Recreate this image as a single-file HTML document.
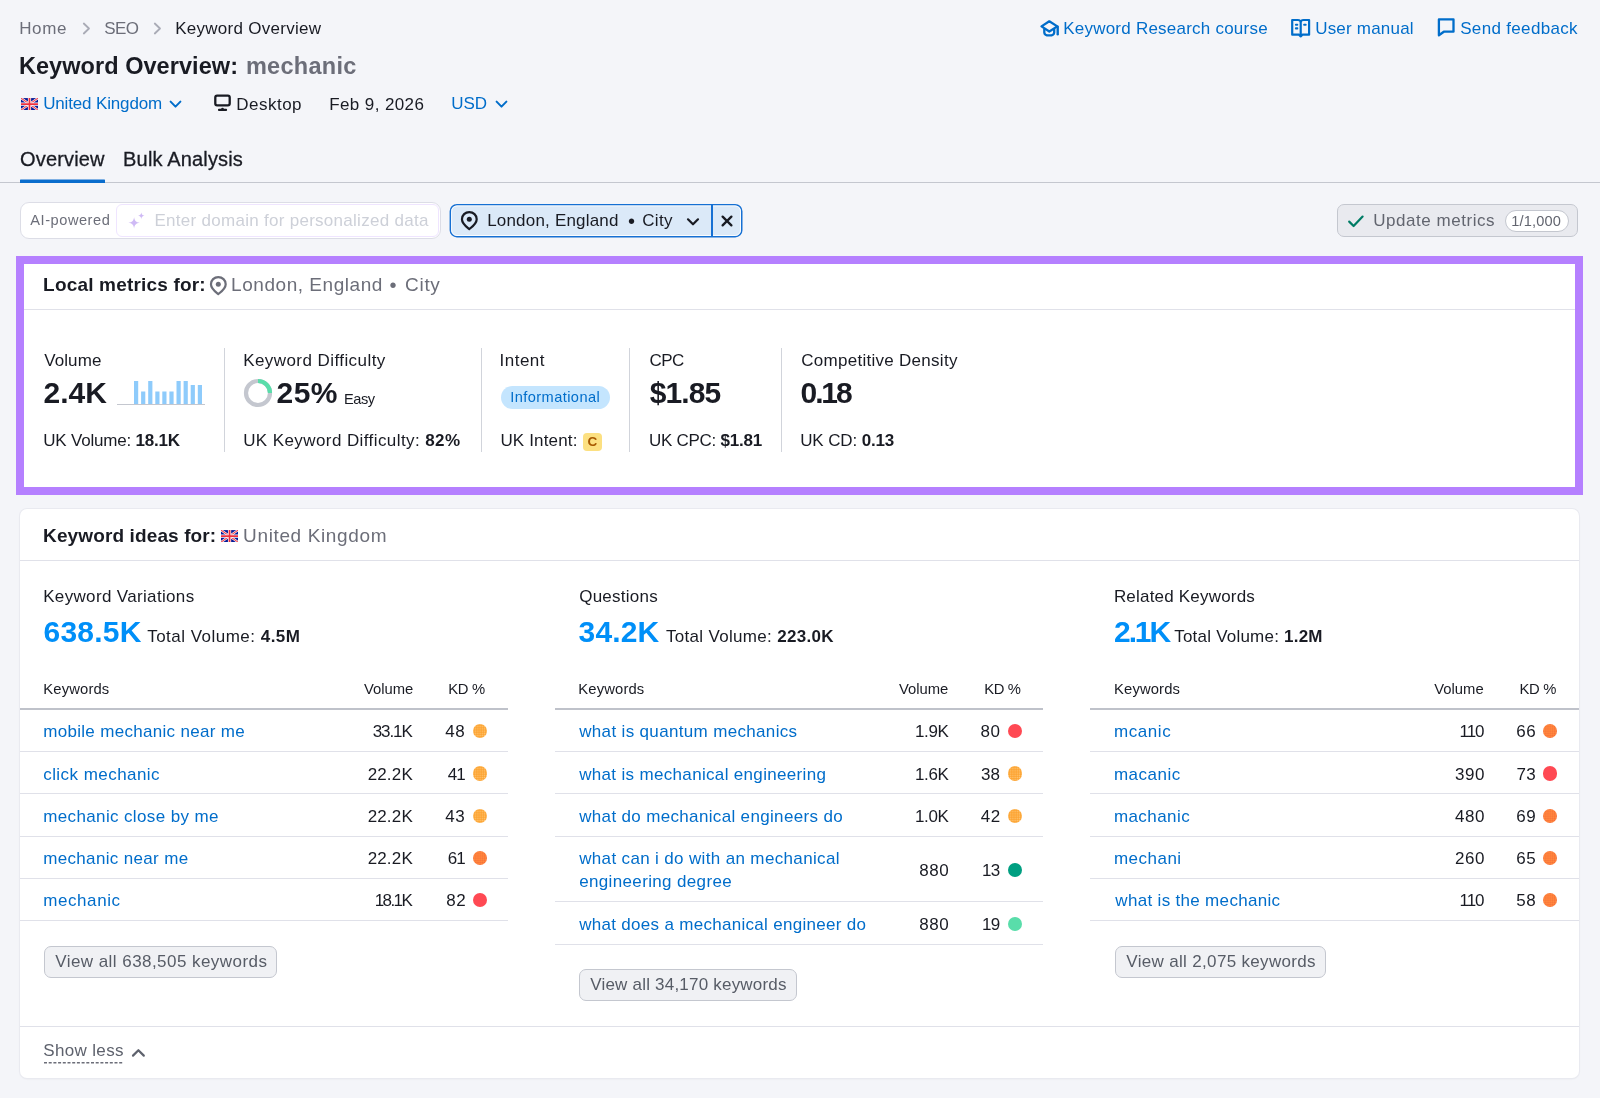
<!DOCTYPE html>
<html lang="en"><head><meta charset="utf-8"><title>Keyword Overview: mechanic</title>
<style>
*{box-sizing:border-box}
html,body{margin:0;padding:0}
body{width:1600px;height:1098px;overflow:hidden;position:relative;background:#f4f5f9;
 font-family:"Liberation Sans",Arial,sans-serif;color:#191b23;-webkit-font-smoothing:antialiased}
#app{position:absolute;left:0;top:0;width:1600px;height:1098px;will-change:transform}
.t{position:absolute;white-space:nowrap;line-height:1}
.t b{font-weight:700}
a.t{color:#006dca;text-decoration:none}
</style></head>
<body>
<div id="app">
<header>
<nav>
<span class="t" id="t1" style="left:19.2px;top:20px;font-size:17px;color:#6c6e79;letter-spacing:0.63px;">Home</span>
<svg style="position:absolute;left:82px;top:22px;" width="9" height="13" viewBox="0 0 9 13" fill="none"><path d="M1.8 1.5 L7 6.5 L1.8 11.5" stroke="#a9abb6" stroke-width="1.8" stroke-linecap="round" stroke-linejoin="round"/></svg>
<span class="t" id="t2" style="left:104.2px;top:20px;font-size:17px;color:#6c6e79;letter-spacing:-0.55px;">SEO</span>
<svg style="position:absolute;left:153px;top:22px;" width="9" height="13" viewBox="0 0 9 13" fill="none"><path d="M1.8 1.5 L7 6.5 L1.8 11.5" stroke="#a9abb6" stroke-width="1.8" stroke-linecap="round" stroke-linejoin="round"/></svg>
<span class="t" id="t3" style="left:175.2px;top:20px;font-size:17px;letter-spacing:0.27px;">Keyword Overview</span>
</nav>
<svg style="position:absolute;left:1034px;top:14px;" width="32" height="28" viewBox="0 0 32 28" fill="none"><path d="M15.3 7.3 L23.3 12.4 L15.3 17.5 L7.5 12.4 Z" stroke="#006dca" stroke-width="2.3" stroke-linejoin="round"/><path d="M10.3 14.8 V18.4 C10.3 22.4 20.2 22.4 20.2 18.4 V14.8" stroke="#006dca" stroke-width="2.3" stroke-linejoin="round"/><path d="M23.7 12.8 V20.3" stroke="#006dca" stroke-width="2.4" stroke-linecap="round"/></svg>
<a class="t" href="#" id="t4" style="left:1063.2px;top:20px;font-size:17px;color:#006dca;letter-spacing:0.23px;">Keyword Research course</a>
<svg style="position:absolute;left:1284px;top:12px;" width="32" height="32" viewBox="0 0 32 32" fill="none"><path d="M8.2 8 H13.8 C15.5 8 16.7 8.9 16.7 10.4 V24.4 L15 22.7 H8.2 Z M25.1 8 H19.6 C17.9 8 16.7 8.9 16.7 10.4 V24.4 L18.4 22.7 H25.1 Z" stroke="#006dca" stroke-width="2.2" stroke-linejoin="round"/><rect x="10.9" y="11.7" width="3.4" height="2.1" rx="1" fill="#006dca"/><rect x="10.9" y="15.3" width="3.4" height="2.1" rx="1" fill="#006dca"/><rect x="19.1" y="11.7" width="3.6" height="2.1" rx="1" fill="#006dca"/></svg>
<a class="t" href="#" id="t5" style="left:1315.2px;top:20px;font-size:17px;color:#006dca;letter-spacing:0.20px;">User manual</a>
<svg style="position:absolute;left:1430px;top:12px;" width="32" height="32" viewBox="0 0 32 32" fill="none"><path d="M8.9 7.4 H23.5 V19.7 H13.8 L8.9 23.3 Z" stroke="#006dca" stroke-width="2.3" stroke-linejoin="round"/></svg>
<a class="t" href="#" id="t6" style="left:1460.2px;top:20px;font-size:17px;color:#006dca;letter-spacing:0.33px;">Send feedback</a>
<span class="t" id="title" style="left:18.9px;top:55px;font-size:23.5px;font-weight:700;letter-spacing:0.06px;">Keyword Overview:</span>
<span class="t" id="titlekw" style="left:245.9px;top:55px;font-size:23.5px;font-weight:700;color:#6c6e79;letter-spacing:0.29px;">mechanic</span>
<svg style="position:absolute;left:21px;top:97.8px;" width="17" height="12.2" viewBox="0 0 17 12" fill="none"><rect width="17" height="12" fill="#071a96"/><path d="M0 0 L17 12 M17 0 L0 12" stroke="#fff" stroke-width="2.3"/><path d="M0 0 L17 12 M17 0 L0 12" stroke="#f2444e" stroke-width="1.1"/><path d="M8.5 0 V12 M0 6 H17" stroke="#fff" stroke-width="3.2"/><path d="M8.5 0 V12 M0 6 H17" stroke="#ee2f3c" stroke-width="1.8"/></svg>
<a class="t" href="#" id="t9" style="left:43.2px;top:95px;font-size:17px;color:#006dca;letter-spacing:-0.15px;">United Kingdom</a>
<svg style="position:absolute;left:169px;top:98.5px;" width="13" height="11" viewBox="0 0 13 11" fill="none"><path d="M1.6 2.6 L6.5 7.6 L11.4 2.6" stroke="#006dca" stroke-width="2" stroke-linecap="round" stroke-linejoin="round"/></svg>
<svg style="position:absolute;left:206px;top:86px;" width="32" height="32" viewBox="0 0 32 32" fill="none"><rect x="9.3" y="9.6" width="14.4" height="9.7" rx="1.8" stroke="#191b23" stroke-width="2.3"/><path d="M13 23.9 H20.1" stroke="#191b23" stroke-width="2.1" stroke-linecap="round"/><circle cx="16.5" cy="23" r="1.3" fill="#191b23"/></svg>
<span class="t" id="t10" style="left:236.2px;top:96px;font-size:17px;letter-spacing:0.50px;">Desktop</span>
<span class="t" id="t11" style="left:329.2px;top:96px;font-size:17px;letter-spacing:0.40px;">Feb 9, 2026</span>
<a class="t" href="#" id="t12" style="left:451.2px;top:95px;font-size:17px;color:#006dca;">USD</a>
<svg style="position:absolute;left:494.5px;top:98.5px;" width="13" height="11" viewBox="0 0 13 11" fill="none"><path d="M1.6 2.6 L6.5 7.6 L11.4 2.6" stroke="#006dca" stroke-width="2" stroke-linecap="round" stroke-linejoin="round"/></svg>
</header>
<div class="tabs">
<div style="position:absolute;left:0px;top:182px;width:1600px;height:1px;background:#c4c7cf"></div>
<span class="t" id="t13" style="left:20.1px;top:149px;font-size:20px;letter-spacing:0.14px;-webkit-text-stroke:0.3px #191b23;">Overview</span>
<span class="t" id="t14" style="left:123.1px;top:149px;font-size:20px;letter-spacing:0.16px;-webkit-text-stroke:0.3px #191b23;">Bulk Analysis</span>
<svg style="position:absolute;left:20px;top:179px;" width="85" height="5" viewBox="0 0 85 5" fill="none"><rect x="0" y="0.4" width="85" height="3.7" rx="0.6" fill="#0a6dcd"/></svg>
</div>
<div class="filters">
<div style="position:absolute;left:20px;top:202.4px;width:421px;height:37px;background:#fff;border:1px solid #dcdde6;border-radius:9px"></div>
<span class="t" id="t15" style="left:30.3px;top:213px;font-size:14.6px;color:#6c6e79;letter-spacing:0.54px;">AI-powered</span>
<div style="position:absolute;left:116px;top:204.2px;width:323px;height:32.8px;background:#fff;border:1px solid #efe5ff;border-radius:6px"></div>
<svg style="position:absolute;left:120px;top:204px;" width="32" height="32" viewBox="0 0 32 32" fill="none"><path d="M14.1 13.2 C14.7 16.9 16 18.2 19.8 18.8 C16 19.4 14.7 20.7 14.1 24.4 C13.5 20.7 12.2 19.4 8.4 18.8 C12.2 18.2 13.5 16.9 14.1 13.2 Z" fill="#cfbaf5"/><path d="M21.3 8.5 C21.65 10.6 22.4 11.35 24.5 11.7 C22.4 12.05 21.65 12.8 21.3 14.9 C20.95 12.8 20.2 12.05 18.1 11.7 C20.2 11.35 20.95 10.6 21.3 8.5 Z" fill="#cfbaf5"/></svg>
<span class="t" id="t16" style="left:154.5px;top:212px;font-size:17px;color:#cdd0d8;letter-spacing:0.28px;">Enter domain for personalized data</span>
<svg style="position:absolute;left:448px;top:202px;" width="296" height="37" viewBox="0 0 296 37" fill="none"><rect x="2.35" y="2.65" width="291.4" height="32.1" rx="6.6" fill="#dbe9f8" stroke="#1670d3" stroke-width="1.5"/><rect x="3.6" y="3.9" width="288.9" height="29.6" rx="5.4" stroke="#fff" stroke-opacity=".85" stroke-width="1"/><path d="M264 2.7 V34.7" stroke="#1670d3" stroke-width="2"/></svg>
<svg style="position:absolute;left:454px;top:205px;" width="32" height="32" viewBox="0 0 32 32" fill="none"><path d="M15.3 7.1 C11.2 7.1 7.95 10.2 7.95 14.2 C7.95 18.6 11.9 21.4 15.3 24.1 C18.7 21.4 22.7 18.6 22.7 14.2 C22.7 10.2 19.4 7.1 15.3 7.1 Z" stroke="#191b23" stroke-width="2.2" stroke-linejoin="round"/><circle cx="15.3" cy="14.3" r="2.5" fill="#191b23"/></svg>
<span class="t" id="t17" style="left:487.2px;top:212px;font-size:17px;letter-spacing:0.19px;">London, England</span>
<span class="t" style="left:628px;top:211px;font-size:20px">&bull;</span>
<span class="t" id="t18" style="left:642.2px;top:212px;font-size:17px;letter-spacing:0.33px;">City</span>
<svg style="position:absolute;left:684px;top:214px;" width="18" height="14" viewBox="0 0 18 14" fill="none"><path d="M4 5.3 L9 10.3 L14 5.3" stroke="#191b23" stroke-width="2.2" stroke-linecap="round" stroke-linejoin="round"/></svg>
<svg style="position:absolute;left:719px;top:212.5px;" width="16" height="16" viewBox="0 0 16 16" fill="none"><path d="M3.6 3.6 L12.4 12.4 M12.4 3.6 L3.6 12.4" stroke="#191b23" stroke-width="2.3" stroke-linecap="round"/></svg>
<div style="position:absolute;left:1336.5px;top:204px;width:241.5px;height:33px;background:#e9eaef;border:1px solid #c4c7cf;border-radius:7px"></div>
<svg style="position:absolute;left:1346.5px;top:213.5px;" width="18" height="15" viewBox="0 0 18 15" fill="none"><path d="M2.2 7.6 L6.6 12 L15.6 2.6" stroke="#007c65" stroke-width="2.2" stroke-linecap="round" stroke-linejoin="round"/></svg>
<span class="t" id="t19" style="left:1373.2px;top:212px;font-size:17px;color:#62656f;letter-spacing:0.54px;">Update metrics</span>
<div style="position:absolute;left:1504.5px;top:210px;width:64px;height:22px;background:#fff;border:1px solid #c4c7cf;border-radius:11px"></div>
<span class="t" id="t20" style="left:1511.3px;top:214px;font-size:14.6px;color:#62656f;letter-spacing:0.14px;">1/1,000</span>
</div>
<section class="local">
<div style="position:absolute;left:16px;top:256px;width:1567px;height:239px;background:#fff;border:8px solid #b580ff"></div>
<span class="t" id="lm_h" style="left:43.1px;top:275px;font-size:19px;font-weight:700;letter-spacing:0.18px;">Local metrics for:</span>
<svg style="position:absolute;left:203.2px;top:270px;" width="32" height="32" viewBox="0 0 32 32" fill="none"><path d="M15.3 7.1 C11.2 7.1 7.95 10.2 7.95 14.2 C7.95 18.6 11.9 21.4 15.3 24.1 C18.7 21.4 22.7 18.6 22.7 14.2 C22.7 10.2 19.4 7.1 15.3 7.1 Z" stroke="#6c6e79" stroke-width="2.2" stroke-linejoin="round"/><circle cx="15.3" cy="14.3" r="2.5" fill="#6c6e79"/></svg>
<span class="t" id="lm_loc" style="left:231.1px;top:275px;font-size:19px;color:#6c6e79;letter-spacing:0.54px;">London, England</span>
<span class="t" style="left:389.5px;top:275px;font-size:20px;color:#6c6e79">&bull;</span>
<span class="t" id="lm_city" style="left:405.1px;top:275px;font-size:19px;color:#6c6e79;letter-spacing:0.67px;">City</span>
<div style="position:absolute;left:24px;top:309px;width:1551px;height:1px;background:#e0e1e9"></div>
<div style="position:absolute;left:224px;top:348px;width:1px;height:104px;background:#d1d4db"></div>
<div style="position:absolute;left:481px;top:348px;width:1px;height:104px;background:#d1d4db"></div>
<div style="position:absolute;left:629px;top:348px;width:1px;height:104px;background:#d1d4db"></div>
<div style="position:absolute;left:781px;top:348px;width:1px;height:104px;background:#d1d4db"></div>
<span class="t" id="lv_l" style="left:44.2px;top:352px;font-size:17px;letter-spacing:0.10px;">Volume</span>
<span class="t" id="lv_v" style="left:43.6px;top:378px;font-size:30px;font-weight:700;">2.4K</span>
<div style="position:absolute;left:117px;top:404px;width:88px;height:1px;background:#c4c7cf"></div>
<svg style="position:absolute;left:117px;top:380px;" width="88" height="24" viewBox="0 0 88 24" fill="none"><rect x="17.0" y="1.0" width="4.2" height="23.0" fill="#8ecbfb"/><rect x="24.1" y="11.5" width="4.2" height="12.5" fill="#8ecbfb"/><rect x="31.2" y="1.0" width="4.2" height="23.0" fill="#8ecbfb"/><rect x="38.3" y="11.5" width="4.2" height="12.5" fill="#8ecbfb"/><rect x="45.3" y="11.5" width="4.2" height="12.5" fill="#8ecbfb"/><rect x="52.4" y="11.5" width="4.2" height="12.5" fill="#8ecbfb"/><rect x="59.5" y="1.0" width="4.2" height="23.0" fill="#8ecbfb"/><rect x="66.6" y="1.0" width="4.2" height="23.0" fill="#8ecbfb"/><rect x="73.7" y="5.0" width="4.2" height="19.0" fill="#8ecbfb"/><rect x="80.8" y="5.0" width="4.2" height="19.0" fill="#8ecbfb"/></svg>
<span class="t" id="lv_s" style="left:43.2px;top:432px;font-size:17px;letter-spacing:-0.20px;">UK Volume: <b>18.1K</b></span>
<span class="t" id="lk_l" style="left:243.2px;top:352px;font-size:17px;letter-spacing:0.43px;">Keyword Difficulty</span>
<svg style="position:absolute;left:243px;top:377.8px;" width="30" height="30" viewBox="0 0 30 30" fill="none"><circle cx="15" cy="15" r="12" stroke="#c4c7cf" stroke-width="4.2"/><path d="M15 3 A12 12 0 0 1 27 15" stroke="#59ddaa" stroke-width="4.2"/></svg>
<span class="t" id="lk_v" style="left:276.6px;top:378px;font-size:30px;font-weight:700;letter-spacing:0.45px;">25%</span>
<span class="t" id="lk_e" style="left:344.1px;top:392px;font-size:14.6px;letter-spacing:-0.46px;">Easy</span>
<span class="t" id="lk_s" style="left:243.2px;top:432px;font-size:17px;letter-spacing:0.41px;">UK Keyword Difficulty: <b>82%</b></span>
<span class="t" id="li_l" style="left:499.6px;top:352px;font-size:17px;letter-spacing:0.48px;">Intent</span>
<div style="position:absolute;left:501px;top:386px;width:108.5px;height:23px;background:#c4e5fe;border-radius:12px"></div>
<a class="t" href="#" id="li_v" style="left:510.3px;top:390px;font-size:14.6px;color:#006dca;letter-spacing:0.42px;">Informational</a>
<span class="t" id="li_s" style="left:500.4px;top:432px;font-size:17px;letter-spacing:0.16px;">UK Intent:</span>
<div style="position:absolute;left:583px;top:432.5px;width:18.5px;height:18px;background:#fce081;border-radius:4px"></div>
<span class="t" id="li_c" style="left:587.4px;top:435px;font-size:13.6px;font-weight:700;color:#a75800;">C</span>
<span class="t" id="lc_l" style="left:649.6px;top:352px;font-size:17px;letter-spacing:-0.55px;">CPC</span>
<span class="t" id="lc_v" style="left:649.8px;top:378px;font-size:30px;font-weight:700;letter-spacing:-0.90px;">$1.85</span>
<span class="t" id="lc_s" style="left:648.9px;top:432px;font-size:17px;letter-spacing:-0.25px;">UK CPC: <b>$1.81</b></span>
<span class="t" id="ld_l" style="left:801.2px;top:352px;font-size:17px;letter-spacing:0.28px;">Competitive Density</span>
<span class="t" id="ld_v" style="left:800.6px;top:378px;font-size:30px;font-weight:700;letter-spacing:-2.12px;">0.18</span>
<span class="t" id="ld_s" style="left:800.2px;top:432px;font-size:17px;letter-spacing:-0.13px;">UK CD: <b>0.13</b></span>
</section>
<section class="ideas">
<div style="position:absolute;left:20px;top:509px;width:1559px;height:568.5px;background:#fff;border-radius:7px;box-shadow:0 0 0 1px #e9eaf0, 0 1px 2px rgba(25,27,35,.08)"></div>
<span class="t" id="ki_h" style="left:43.1px;top:526px;font-size:19px;font-weight:700;letter-spacing:0.12px;">Keyword ideas for:</span>
<svg style="position:absolute;left:221.2px;top:529.6px;" width="17.1" height="12.3" viewBox="0 0 17 12" fill="none"><rect width="17" height="12" fill="#071a96"/><path d="M0 0 L17 12 M17 0 L0 12" stroke="#fff" stroke-width="2.3"/><path d="M0 0 L17 12 M17 0 L0 12" stroke="#f2444e" stroke-width="1.1"/><path d="M8.5 0 V12 M0 6 H17" stroke="#fff" stroke-width="3.2"/><path d="M8.5 0 V12 M0 6 H17" stroke="#ee2f3c" stroke-width="1.8"/></svg>
<span class="t" id="ki_c" style="left:243.1px;top:526px;font-size:19px;color:#6c6e79;letter-spacing:0.63px;">United Kingdom</span>
<div style="position:absolute;left:20px;top:559.5px;width:1559px;height:1px;background:#e0e1e9"></div>
<div style="position:absolute;left:20px;top:1025.5px;width:1559px;height:1px;background:#e0e1e9"></div>
<span class="t" id="ki_sl" style="left:43.2px;top:1042px;font-size:17px;color:#5e626d;letter-spacing:0.36px;">Show less</span>
<svg style="position:absolute;left:44px;top:1061px;" width="80" height="4" viewBox="0 0 80 4" fill="none"><path d="M0 1.7 H79.5" stroke="#6c6e79" stroke-width="1.4" stroke-dasharray="3 1.7"/></svg>
<svg style="position:absolute;left:131px;top:1047px;" width="15" height="11" viewBox="0 0 15 11" fill="none"><path d="M2 8.6 L7.4 3.2 L12.8 8.6" stroke="#5e626d" stroke-width="2.2" stroke-linecap="round" stroke-linejoin="round"/></svg>
<div class="col col1">
<span class="t" id="c1_t" style="left:43.2px;top:588px;font-size:17px;letter-spacing:0.34px;">Keyword Variations</span>
<span class="t" id="c1_b" style="left:43.6px;top:617px;font-size:30px;font-weight:700;color:#008ff8;letter-spacing:0.20px;">638.5K</span>
<span class="t" id="c1_tv" style="left:147.2px;top:628px;font-size:17px;letter-spacing:0.48px;">Total Volume: <b>4.5M</b></span>
<span class="t" id="c1_h1" style="left:43.3px;top:682px;font-size:14.8px;letter-spacing:0.14px;">Keywords</span>
<span class="t" id="c1_h2" style="left:363.9px;top:682px;font-size:14.8px;">Volume</span>
<span class="t" id="c1_h3" style="left:448.3px;top:682px;font-size:14.8px;letter-spacing:-0.34px;">KD %</span>
<div style="position:absolute;left:20.2px;top:708.4px;width:488.2px;height:1.6px;background:#bfc2ca"></div>
<a class="t" href="#" id="c1_k0" style="left:43.2px;top:723px;font-size:17px;color:#006dca;letter-spacing:0.31px;">mobile mechanic near me</a>
<span class="t" id="c1_v0" style="right:1188.3px;top:723px;font-size:17px;letter-spacing:-1.07px;">33.1K</span>
<span class="t" id="c1_d0" style="right:1134.7px;top:723px;font-size:17px;letter-spacing:0.55px;">48</span>
<div style="position:absolute;left:472.5px;top:724.1px;width:14.2px;height:14.2px;background-color:#fda535;border-radius:50%;background-image:radial-gradient(circle,rgba(255,226,170,.6) 0.45px,transparent 0.85px);background-size:2.2px 2.2px;background-position:center;"></div>
<div style="position:absolute;left:20.2px;top:751.0px;width:488.2px;height:1px;background:#e0e1e9"></div>
<a class="t" href="#" id="c1_k1" style="left:43.2px;top:766px;font-size:17px;color:#006dca;letter-spacing:0.45px;">click mechanic</a>
<span class="t" id="c1_v1" style="right:1187.1px;top:766px;font-size:17px;letter-spacing:0.17px;">22.2K</span>
<span class="t" id="c1_d1" style="right:1135.1px;top:766px;font-size:17px;letter-spacing:-0.82px;">41</span>
<div style="position:absolute;left:472.5px;top:766.4px;width:14.2px;height:14.2px;background-color:#fda535;border-radius:50%;background-image:radial-gradient(circle,rgba(255,226,170,.6) 0.45px,transparent 0.85px);background-size:2.2px 2.2px;background-position:center;"></div>
<div style="position:absolute;left:20.2px;top:793.2px;width:488.2px;height:1px;background:#e0e1e9"></div>
<a class="t" href="#" id="c1_k2" style="left:43.2px;top:808px;font-size:17px;color:#006dca;letter-spacing:0.37px;">mechanic close by me</a>
<span class="t" id="c1_v2" style="right:1187.1px;top:808px;font-size:17px;letter-spacing:0.17px;">22.2K</span>
<span class="t" id="c1_d2" style="right:1134.7px;top:808px;font-size:17px;letter-spacing:0.55px;">43</span>
<div style="position:absolute;left:472.5px;top:808.6px;width:14.2px;height:14.2px;background-color:#fda535;border-radius:50%;background-image:radial-gradient(circle,rgba(255,226,170,.6) 0.45px,transparent 0.85px);background-size:2.2px 2.2px;background-position:center;"></div>
<div style="position:absolute;left:20.2px;top:835.5px;width:488.2px;height:1px;background:#e0e1e9"></div>
<a class="t" href="#" id="c1_k3" style="left:43.2px;top:850px;font-size:17px;color:#006dca;letter-spacing:0.34px;">mechanic near me</a>
<span class="t" id="c1_v3" style="right:1187.1px;top:850px;font-size:17px;letter-spacing:0.17px;">22.2K</span>
<span class="t" id="c1_d3" style="right:1135.1px;top:850px;font-size:17px;letter-spacing:-0.82px;">61</span>
<div style="position:absolute;left:472.5px;top:850.9px;width:14.2px;height:14.2px;background-color:#ff8a3d;border-radius:50%;background-image:radial-gradient(circle,rgba(238,70,50,.6) 0.5px,transparent 0.9px);background-size:2.1px 2.1px;background-position:center;"></div>
<div style="position:absolute;left:20.2px;top:877.7px;width:488.2px;height:1px;background:#e0e1e9"></div>
<a class="t" href="#" id="c1_k4" style="left:43.2px;top:892px;font-size:17px;color:#006dca;letter-spacing:0.59px;">mechanic</a>
<span class="t" id="c1_v4" style="right:1188.8px;top:892px;font-size:17px;letter-spacing:-1.60px;">18.1K</span>
<span class="t" id="c1_d4" style="right:1133.7px;top:892px;font-size:17px;letter-spacing:0.55px;">82</span>
<div style="position:absolute;left:472.5px;top:893.1px;width:14.2px;height:14.2px;background-color:#ff4953;border-radius:50%;"></div>
<div style="position:absolute;left:20.2px;top:920.0px;width:488.2px;height:1px;background:#e0e1e9"></div>
<div style="position:absolute;left:43.9px;top:945.6px;width:232.8px;height:32.3px;background:#f0f1f4;border:1px solid #c4c7cf;border-radius:7px"></div>
<span class="t" id="c1_btn" style="left:55.2px;top:953px;font-size:17px;color:#575c66;letter-spacing:0.45px;">View all 638,505 keywords</span>
</div>
<div class="col col2">
<span class="t" id="c2_t" style="left:579.2px;top:588px;font-size:17px;letter-spacing:0.25px;">Questions</span>
<span class="t" id="c2_b" style="left:578.6px;top:617px;font-size:30px;font-weight:700;color:#008ff8;letter-spacing:0.12px;">34.2K</span>
<span class="t" id="c2_tv" style="left:666.0px;top:628px;font-size:17px;letter-spacing:0.31px;">Total Volume: <b>223.0K</b></span>
<span class="t" id="c2_h1" style="left:578.3px;top:682px;font-size:14.8px;letter-spacing:0.14px;">Keywords</span>
<span class="t" id="c2_h2" style="left:898.9px;top:682px;font-size:14.8px;">Volume</span>
<span class="t" id="c2_h3" style="left:984.2px;top:682px;font-size:14.8px;letter-spacing:-0.34px;">KD %</span>
<div style="position:absolute;left:555.2px;top:708.4px;width:488.2px;height:1.6px;background:#bfc2ca"></div>
<a class="t" href="#" id="c2_k0" style="left:579.2px;top:723px;font-size:17px;color:#006dca;letter-spacing:0.34px;">what is quantum mechanics</a>
<span class="t" id="c2_v0" style="right:651.7px;top:723px;font-size:17px;letter-spacing:-0.44px;">1.9K</span>
<span class="t" id="c2_d0" style="right:599.5px;top:723px;font-size:17px;letter-spacing:0.55px;">80</span>
<div style="position:absolute;left:1007.9px;top:724.1px;width:14.2px;height:14.2px;background-color:#ff4953;border-radius:50%;"></div>
<div style="position:absolute;left:555.2px;top:751.0px;width:488.2px;height:1px;background:#e0e1e9"></div>
<a class="t" href="#" id="c2_k1" style="left:579.2px;top:766px;font-size:17px;color:#006dca;letter-spacing:0.33px;">what is mechanical engineering</a>
<span class="t" id="c2_v1" style="right:651.7px;top:766px;font-size:17px;letter-spacing:-0.44px;">1.6K</span>
<span class="t" id="c2_d1" style="right:600.0px;top:766px;font-size:17px;">38</span>
<div style="position:absolute;left:1007.9px;top:766.4px;width:14.2px;height:14.2px;background-color:#fda535;border-radius:50%;background-image:radial-gradient(circle,rgba(255,226,170,.6) 0.45px,transparent 0.85px);background-size:2.2px 2.2px;background-position:center;"></div>
<div style="position:absolute;left:555.2px;top:793.2px;width:488.2px;height:1px;background:#e0e1e9"></div>
<a class="t" href="#" id="c2_k2" style="left:579.2px;top:808px;font-size:17px;color:#006dca;letter-spacing:0.34px;">what do mechanical engineers do</a>
<span class="t" id="c2_v2" style="right:651.7px;top:808px;font-size:17px;letter-spacing:-0.44px;">1.0K</span>
<span class="t" id="c2_d2" style="right:599.3px;top:808px;font-size:17px;letter-spacing:0.55px;">42</span>
<div style="position:absolute;left:1007.9px;top:808.6px;width:14.2px;height:14.2px;background-color:#fda535;border-radius:50%;background-image:radial-gradient(circle,rgba(255,226,170,.6) 0.45px,transparent 0.85px);background-size:2.2px 2.2px;background-position:center;"></div>
<div style="position:absolute;left:555.2px;top:835.5px;width:488.2px;height:1px;background:#e0e1e9"></div>
<a class="t" href="#" id="c2_k3a" style="left:579.2px;top:850px;font-size:17px;color:#006dca;letter-spacing:0.35px;">what can i do with an mechanical</a>
<a class="t" href="#" id="c2_k3b" style="left:579.2px;top:873px;font-size:17px;color:#006dca;letter-spacing:0.35px;">engineering degree</a>
<span class="t" id="c2_v3" style="right:650.7px;top:862px;font-size:17px;letter-spacing:0.55px;">880</span>
<span class="t" id="c2_d3" style="right:600.7px;top:862px;font-size:17px;letter-spacing:-0.82px;">13</span>
<div style="position:absolute;left:1007.9px;top:862.6px;width:14.2px;height:14.2px;background-color:#009f81;border-radius:50%;"></div>
<div style="position:absolute;left:555.2px;top:901.4px;width:488.2px;height:1px;background:#e0e1e9"></div>
<a class="t" href="#" id="c2_k4" style="left:579.2px;top:916px;font-size:17px;color:#006dca;letter-spacing:0.30px;">what does a mechanical engineer do</a>
<span class="t" id="c2_v4" style="right:650.7px;top:916px;font-size:17px;letter-spacing:0.55px;">880</span>
<span class="t" id="c2_d4" style="right:600.7px;top:916px;font-size:17px;letter-spacing:-0.82px;">19</span>
<div style="position:absolute;left:1007.9px;top:916.8px;width:14.2px;height:14.2px;background-color:#59ddaa;border-radius:50%;"></div>
<div style="position:absolute;left:555.2px;top:943.6px;width:488.2px;height:1px;background:#e0e1e9"></div>
<div style="position:absolute;left:579.3px;top:969.2px;width:217.9px;height:32.3px;background:#f0f1f4;border:1px solid #c4c7cf;border-radius:7px"></div>
<span class="t" id="c2_btn" style="left:590.2px;top:976px;font-size:17px;color:#575c66;letter-spacing:0.21px;">View all 34,170 keywords</span>
</div>
<div class="col col3">
<span class="t" id="c3_t" style="left:1113.9px;top:588px;font-size:17px;letter-spacing:0.20px;">Related Keywords</span>
<span class="t" id="c3_b" style="left:1114.1px;top:617px;font-size:30px;font-weight:700;color:#008ff8;letter-spacing:-2.12px;">2.1K</span>
<span class="t" id="c3_tv" style="left:1174.2px;top:628px;font-size:17px;letter-spacing:0.22px;">Total Volume: <b>1.2M</b></span>
<span class="t" id="c3_h1" style="left:1114.0px;top:682px;font-size:14.8px;letter-spacing:0.14px;">Keywords</span>
<span class="t" id="c3_h2" style="left:1434.3px;top:682px;font-size:14.8px;">Volume</span>
<span class="t" id="c3_h3" style="left:1519.5px;top:682px;font-size:14.8px;letter-spacing:-0.34px;">KD %</span>
<div style="position:absolute;left:1090.4px;top:708.4px;width:488.2px;height:1.6px;background:#bfc2ca"></div>
<a class="t" href="#" id="c3_k0" style="left:1113.9px;top:723px;font-size:17px;color:#006dca;letter-spacing:0.60px;">mcanic</a>
<span class="t" id="c3_v0" style="right:116.6px;top:723px;font-size:17px;letter-spacing:-1.10px;">110</span>
<span class="t" id="c3_d0" style="right:63.7px;top:723px;font-size:17px;letter-spacing:0.55px;">66</span>
<div style="position:absolute;left:1543.2px;top:724.1px;width:14.2px;height:14.2px;background-color:#ff8a3d;border-radius:50%;background-image:radial-gradient(circle,rgba(238,70,50,.6) 0.5px,transparent 0.9px);background-size:2.1px 2.1px;background-position:center;"></div>
<div style="position:absolute;left:1090.4px;top:751.0px;width:488.2px;height:1px;background:#e0e1e9"></div>
<a class="t" href="#" id="c3_k1" style="left:1113.9px;top:766px;font-size:17px;color:#006dca;letter-spacing:0.51px;">macanic</a>
<span class="t" id="c3_v1" style="right:115.0px;top:766px;font-size:17px;letter-spacing:0.55px;">390</span>
<span class="t" id="c3_d1" style="right:63.8px;top:766px;font-size:17px;letter-spacing:0.45px;">73</span>
<div style="position:absolute;left:1543.2px;top:766.4px;width:14.2px;height:14.2px;background-color:#ff4953;border-radius:50%;"></div>
<div style="position:absolute;left:1090.4px;top:793.2px;width:488.2px;height:1px;background:#e0e1e9"></div>
<a class="t" href="#" id="c3_k2" style="left:1113.9px;top:808px;font-size:17px;color:#006dca;letter-spacing:0.43px;">machanic</a>
<span class="t" id="c3_v2" style="right:115.0px;top:808px;font-size:17px;letter-spacing:0.55px;">480</span>
<span class="t" id="c3_d2" style="right:63.7px;top:808px;font-size:17px;letter-spacing:0.55px;">69</span>
<div style="position:absolute;left:1543.2px;top:808.6px;width:14.2px;height:14.2px;background-color:#ff8a3d;border-radius:50%;background-image:radial-gradient(circle,rgba(238,70,50,.6) 0.5px,transparent 0.9px);background-size:2.1px 2.1px;background-position:center;"></div>
<div style="position:absolute;left:1090.4px;top:835.5px;width:488.2px;height:1px;background:#e0e1e9"></div>
<a class="t" href="#" id="c3_k3" style="left:1113.9px;top:850px;font-size:17px;color:#006dca;letter-spacing:0.50px;">mechani</a>
<span class="t" id="c3_v3" style="right:115.0px;top:850px;font-size:17px;letter-spacing:0.55px;">260</span>
<span class="t" id="c3_d3" style="right:63.7px;top:850px;font-size:17px;letter-spacing:0.55px;">65</span>
<div style="position:absolute;left:1543.2px;top:850.9px;width:14.2px;height:14.2px;background-color:#ff8a3d;border-radius:50%;background-image:radial-gradient(circle,rgba(238,70,50,.6) 0.5px,transparent 0.9px);background-size:2.1px 2.1px;background-position:center;"></div>
<div style="position:absolute;left:1090.4px;top:877.7px;width:488.2px;height:1px;background:#e0e1e9"></div>
<a class="t" href="#" id="c3_k4" style="left:1115.3px;top:892px;font-size:17px;color:#006dca;letter-spacing:0.32px;">what is the mechanic</a>
<span class="t" id="c3_v4" style="right:116.6px;top:892px;font-size:17px;letter-spacing:-1.10px;">110</span>
<span class="t" id="c3_d4" style="right:63.7px;top:892px;font-size:17px;letter-spacing:0.55px;">58</span>
<div style="position:absolute;left:1543.2px;top:893.1px;width:14.2px;height:14.2px;background-color:#ff8a3d;border-radius:50%;background-image:radial-gradient(circle,rgba(238,70,50,.6) 0.5px,transparent 0.9px);background-size:2.1px 2.1px;background-position:center;"></div>
<div style="position:absolute;left:1090.4px;top:920.0px;width:488.2px;height:1px;background:#e0e1e9"></div>
<div style="position:absolute;left:1114.6px;top:945.6px;width:211.0px;height:32.3px;background:#f0f1f4;border:1px solid #c4c7cf;border-radius:7px"></div>
<span class="t" id="c3_btn" style="left:1126.3px;top:953px;font-size:17px;color:#575c66;letter-spacing:0.33px;">View all 2,075 keywords</span>
</div>
</section>
</div>
</body></html>
